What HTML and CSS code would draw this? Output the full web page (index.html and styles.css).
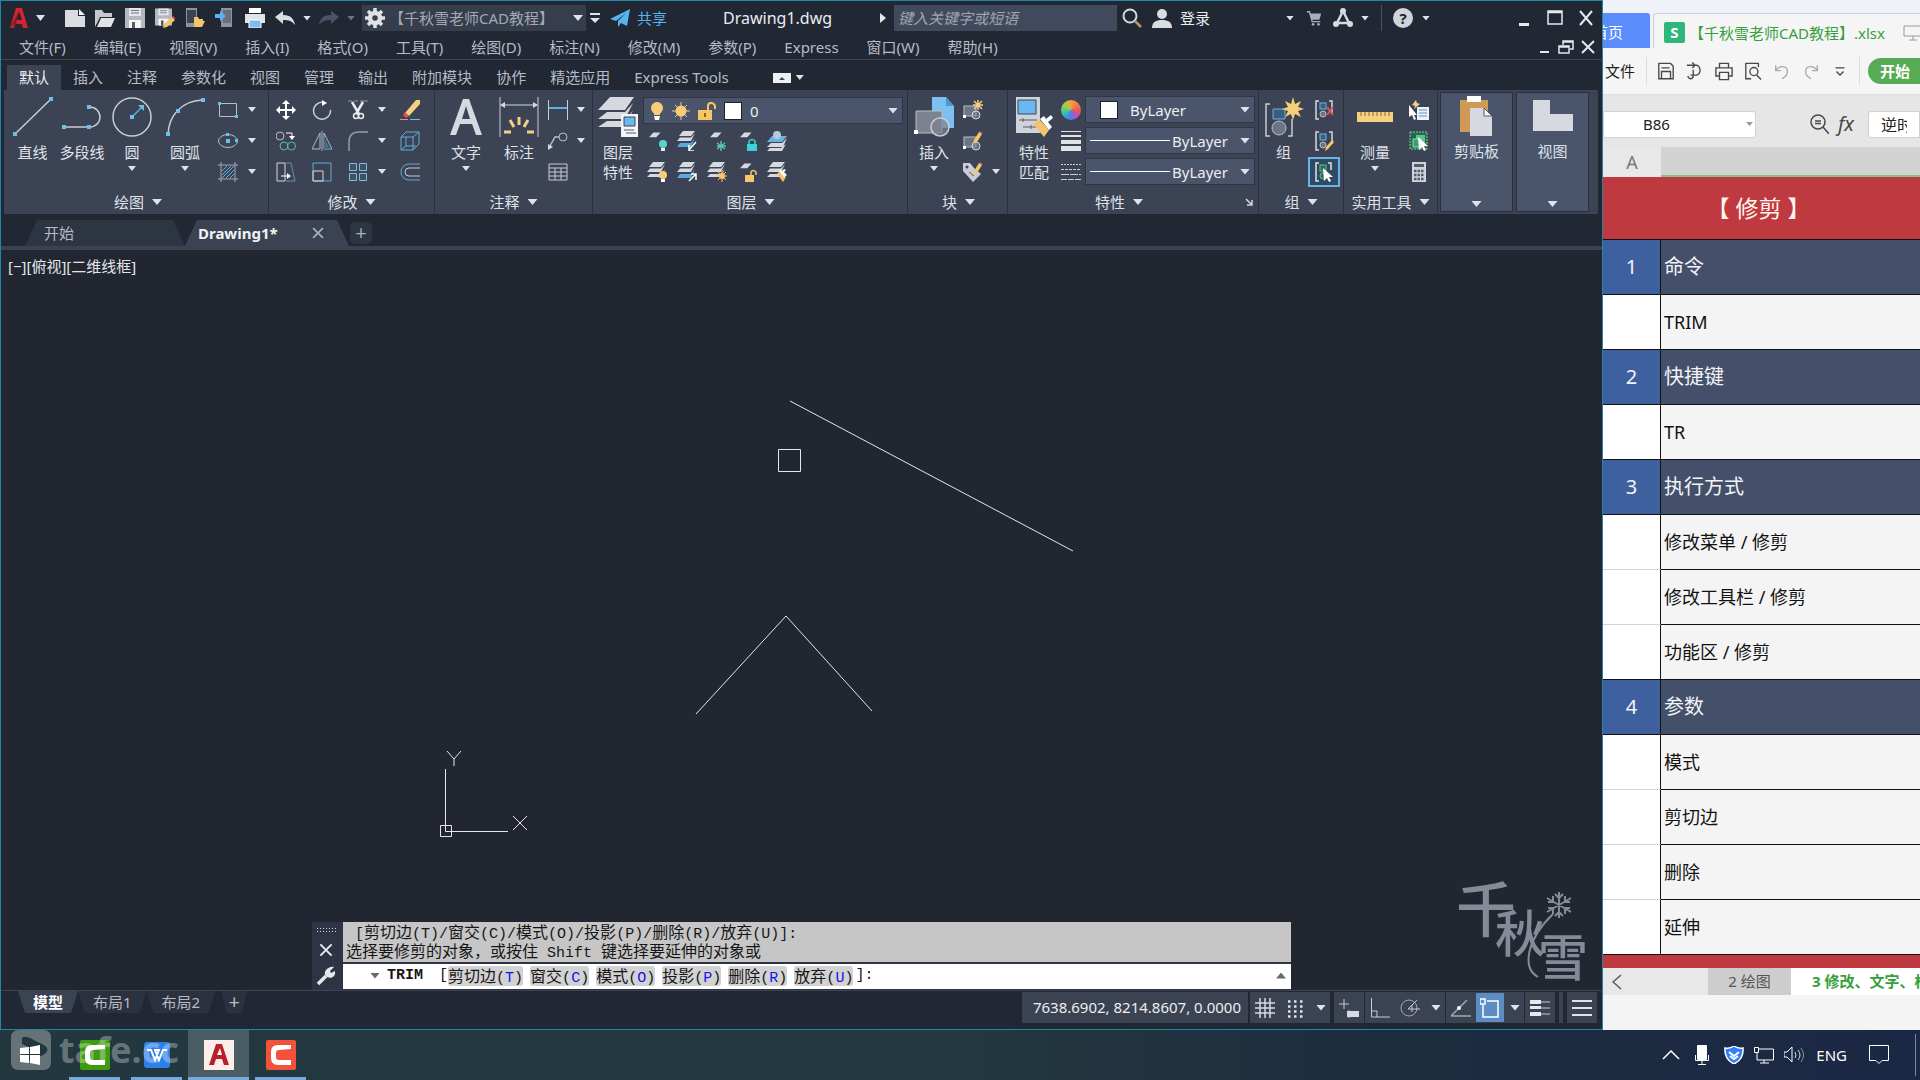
FILE: index.html
```html
<!DOCTYPE html>
<html lang="zh-CN">
<head>
<meta charset="utf-8">
<title>Drawing1.dwg</title>
<link rel="stylesheet" href="styles.css">
</head>
<body>
<svg class="sprite" aria-hidden="true">
  <symbol id="i-layer" viewBox="0 0 20 20"><path d="M8 4h12l-7 8H1z" fill="#d6d9df"/></symbol>
  <symbol id="i-stack" viewBox="0 0 20 20"><g fill="#d6d9df"><path d="M6 0h12l-4 5H2z"/><path d="M3 6.500h11l4-4.500-4 8H0z"/><path d="M3 12h11l4-5-4 8H0z"/></g></symbol>
  <symbol id="i-stackblue" viewBox="0 0 20 20"><path d="M6 0h12l-4 5H2z" fill="#d6d9df"/><path d="M3 6.500h11l4-4.500-4 8H0z" fill="#d6d9df"/><path d="M3 12h11l4-5-4 9H0z" fill="#5ba8e0"/></symbol>
  <symbol id="i-brush" viewBox="0 0 20 20"><path d="M10 12l3-3 6 6-3 5z" fill="#f2c46c"/><path d="M12 9l5 6 3-2-3-3 2-2-2-1-2 2-1-2z" fill="#fff"/></symbol>
  <symbol id="i-block" viewBox="0 0 20 20"><rect x="1" y="6" width="12" height="10" fill="#6d7483" stroke="#b9bec8"/><circle cx="13" cy="15" r="4" fill="#7f8694" fill-opacity=".6" stroke="#d6d9df"/><path d="M0 15h3v3H0z" fill="#fff"/></symbol>
  <symbol id="i-pencil" viewBox="0 0 20 20"><path d="M11 9l5-8 3 2-5 8-4 1z" fill="#f6c667"/><path d="M16 1l1-1 3 2-1 1z" fill="#e0525c"/></symbol>
  <symbol id="i-floppy" viewBox="0 0 20 20"><path d="M0 0h20v20H0z" fill="#b4b8bf"/><path d="M4 0h12v8H4z" fill="#e4e6ea"/><path d="M6 2.500h8M6 5h8" stroke="#70757f"/><path d="M4 12h12v8H4z" fill="#f5f5f5"/><path d="M7 14h3v6H7z" fill="#555b68"/></symbol>
  <symbol id="i-cursor" viewBox="0 0 20 20"><path d="M9 6l10 9h-4l2 4-2 1-2-4-3 3z" fill="#fff"/></symbol>
  <symbol id="i-group" viewBox="0 0 20 20"><path d="M5 1H2v18h3M15 1h3v12" fill="none" stroke="#d6d9df" stroke-width="1.500"/><rect x="6" y="3" width="6" height="6" fill="#3b5e7c" stroke="#6bb3e6"/><circle cx="9" cy="14" r="3" fill="#6d7483" stroke="#b9bec8"/></symbol>
  <symbol id="i-x" viewBox="0 0 20 20"><path d="M3 3l14 14M17 3L3 17" fill="none" stroke="currentColor" stroke-width="2.500"/></symbol>
</svg>

<main class="desktop">
<section class="cad">
  <header class="titlebar">
    <button class="logo" aria-label="应用程序菜单"><svg width="18" height="20" viewBox="0 0 18 20"><path d="M0 20L6 0h6l6 20h-5l-1-4H5l-1 4zM6 12h6L9 3z" fill="#d5232f"/><path d="M0 20L9 3l-3 13H5z" fill="#8f1822"/></svg></button>
    <i class="caret caret-logo"></i>
    <button class="qa" aria-label="新建"><svg viewBox="0 0 20 20"><path d="M0 2h13v6h7v11H0z" fill="#d9dce1"/><path d="M14 1l6 6h-6z" fill="#f3f4f6"/></svg></button>
    <button class="qa" aria-label="打开"><svg viewBox="0 0 20 20"><path d="M0 2h7l2 3h8v4H5L0 19z" fill="#c5c8ce"/><path d="M6 10h14l-4 9H2z" fill="#e1e3e7"/></svg></button>
    <button class="qa" aria-label="保存"><svg viewBox="0 0 20 20"><use href="#i-floppy"/></svg></button>
    <button class="qa" aria-label="另存为"><svg viewBox="0 0 20 20"><use href="#i-floppy" width="17" height="18"/><path d="M8 20l1-4 8-7 3 3-8 7z" fill="#f6c667"/><path d="M17 9l1-1 2 2v2z" fill="#e0525c"/></svg></button>
    <button class="qa" aria-label="从移动设备打开"><svg viewBox="0 0 20 20"><path d="M1 0h11v19H1z" fill="#8d929c"/><path d="M2 2h9v13H2z" fill="#3c4250"/><path d="M9 19V9h4l1 2h4v2h2l-3 6z" fill="#f2c46c"/></svg></button>
    <button class="qa" aria-label="保存到移动设备"><svg viewBox="0 0 20 20"><path d="M6 0h11v19H6z" fill="#8d929c"/><path d="M8 2h8v13H8z" fill="#69707d"/><path d="M0 6h5V3l6 5-6 5v-3H0z" fill="#5ab2f0"/></svg></button>
    <button class="qa" aria-label="打印"><svg viewBox="0 0 20 20"><path d="M4 0h12v5H4z" fill="#fff"/><path d="M0 6h20v9H0z" fill="#e1e3e7"/><path d="M4 12h12v8H4z" fill="#7dbbf0" stroke="#fff"/></svg></button>
    <button class="qa" aria-label="放弃"><svg viewBox="0 0 20 20"><path d="M0 9l8-6v4c8 0 11 4 12 10-3-4-6-5-12-5v4z" fill="#d9dce1"/></svg></button>
    <i class="caret caret-s"></i>
    <button class="qa qa-redo" aria-label="重做"><svg viewBox="0 0 20 20"><path d="M20 9l-8-6v4C4 7 1 11 0 17c3-4 6-5 12-5v4z" fill="#4c5364"/></svg></button>
    <i class="caret caret-s dim"></i>
    <div class="workspace">
      <svg width="20" height="20" viewBox="0 0 20 20"><circle cx="10" cy="10" r="5" fill="none" stroke="#dfe1e6" stroke-width="4.500"/><path d="M10 0v4M10 16v4M0 10h4M16 10h4M3 3l3 3M14 14l3 3M17 3l-3 3M6 14l-3 3" stroke="#dfe1e6" stroke-width="3.500"/></svg>
      <select aria-label="工作空间"><option>【千秋雪老师CAD教程】</option></select><i class="caret"></i>
    </div>
    <i class="more"></i>
    <button class="share"><svg width="20" height="20" viewBox="0 0 20 20"><path d="M0 11L20 1l-3 17-6-3-3 4v-6l8-8-10 8z" fill="#5ab2f0"/></svg>共享</button>
    <span class="doc">Drawing1.dwg</span>
    <i class="play"></i>
    <input class="search" type="search" placeholder="键入关键字或短语" aria-label="搜索">
    <button class="qa" aria-label="搜索"><svg viewBox="0 0 20 20"><circle cx="8" cy="8" r="6.500" fill="none" stroke="#d6d9df" stroke-width="2"/><path d="M13 13l6 6" stroke="#b49a5e" stroke-width="2.500"/></svg></button>
    <button class="login"><svg width="20" height="20" viewBox="0 0 20 20"><circle cx="10" cy="6" r="5" fill="#d9dce1"/><path d="M0 20c0-6 4-8 10-8s10 2 10 8z" fill="#d9dce1"/></svg>登录</button>
    <span class="grow"></span>
    <i class="caret caret-s"></i>
    <button class="qa qa-cart" aria-label="商店"><svg viewBox="0 0 20 20"><path d="M2 3h3l3 11h9" fill="none" stroke="#a9adb6" stroke-width="1.500"/><path d="M5 5h13l-2 7H7z" fill="#a9adb6"/><circle cx="9" cy="17" r="1.500" fill="#a9adb6"/><circle cx="15" cy="17" r="1.500" fill="#a9adb6"/></svg></button>
    <button class="qa" aria-label="应用"><svg viewBox="0 0 20 20"><path d="M10 3L4 15h12z" fill="none" stroke="#d6d9df" stroke-width="2.500"/><circle cx="10" cy="3" r="3" fill="#d6d9df"/><circle cx="3" cy="16" r="3" fill="#d6d9df"/><circle cx="17" cy="16" r="3" fill="#d6d9df"/></svg></button>
    <i class="caret caret-s"></i>
    <i class="tsep"></i>
    <button class="help" aria-label="帮助">?</button>
    <i class="caret caret-s caret-help"></i>
    <button class="win" aria-label="最小化"><svg viewBox="0 0 20 20"><path d="M5 15h10v3H5z" fill="#e6e8ec"/></svg></button>
    <button class="win" aria-label="最大化"><svg viewBox="0 0 20 20"><path d="M3 3h14v13H3zM3 4.500h14" fill="none" stroke="#e6e8ec" stroke-width="1.500"/></svg></button>
    <button class="win" aria-label="关闭"><svg viewBox="0 0 20 20"><path d="M4 3l12 14M16 3L4 17" stroke="#e6e8ec" stroke-width="2"/></svg></button>
  </header>

  <nav class="menubar">
    <a href="#">文件(F)</a><a href="#">编辑(E)</a><a href="#">视图(V)</a><a href="#">插入(I)</a><a href="#">格式(O)</a><a href="#">工具(T)</a><a href="#">绘图(D)</a><a href="#">标注(N)</a><a href="#">修改(M)</a><a href="#">参数(P)</a><a href="#">Express</a><a href="#">窗口(W)</a><a href="#">帮助(H)</a>
    <span class="grow"></span>
    <button class="mdi" aria-label="最小化图形"><svg viewBox="0 0 20 20"><path d="M6 14h9v2H6z" fill="#e6e8ec"/></svg></button>
    <button class="mdi" aria-label="还原图形"><svg viewBox="0 0 20 20"><path d="M3 9h10v7H3zM3 10h10M7 8V4h10v8h-3M7 5h10" fill="none" stroke="#e6e8ec" stroke-width="1.500"/></svg></button>
    <button class="mdi" aria-label="关闭图形"><svg viewBox="0 0 20 20"><path d="M4 4l12 12M16 4L4 16" stroke="#e6e8ec" stroke-width="2"/></svg></button>
  </nav>

  <nav class="ribbon-tabs">
    <a class="on" href="#">默认</a><a href="#">插入</a><a href="#">注释</a><a href="#">参数化</a><a href="#">视图</a><a href="#">管理</a><a href="#">输出</a><a href="#">附加模块</a><a href="#">协作</a><a href="#">精选应用</a><a href="#">Express Tools</a>
    <button class="collapse" aria-label="最小化功能区"><svg width="18" height="10" viewBox="0 0 18 10"><path d="M0 0h18v10H0z" fill="#eef0f3"/><path d="M6 7h6L9 4z" fill="#444"/></svg></button><i class="caret caret-s"></i>
  </nav>

  <div class="ribbon">
    <section class="panel p-draw">
      <div class="body">
        <button class="big b-49"><svg viewBox="0 0 40 40"><path d="M2 37L38 2" stroke="#c9ccd3" stroke-width="1.500"/><path d="M0 35h4v4H0zM36 0h4v4h-4z" fill="#6bc0e8"/></svg>直线</button>
        <button class="big b-50"><svg viewBox="0 0 40 40"><path d="M2 30h26a10 10 0 0 0 0-20" fill="none" stroke="#c9ccd3" stroke-width="1.500"/><path d="M0 28h4v4H0zM25 28h4v4h-4zM25 8h4v4h-4z" fill="#6bc0e8"/></svg>多段线</button>
        <button class="big b-50"><svg viewBox="0 0 40 40"><circle cx="20" cy="20" r="19" fill="none" stroke="#c9ccd3" stroke-width="1.500"/><path d="M20 20l10-10" stroke="#5ab2e0" stroke-width="1.500"/><path d="M18 18h4v4h-4zM26 8h6v6z" fill="#6bc0e8"/></svg>圆<i class="caret caret-s"></i></button>
        <button class="big b-56"><svg viewBox="0 0 40 40"><path d="M3 37C4 18 17 4 37 3" fill="none" stroke="#c9ccd3" stroke-width="1.500"/><path d="M1 35h4v4H1zM36 1h4v4h-4zM11 12h4v4h-4z" fill="#6bc0e8"/></svg>圆弧<i class="caret caret-s"></i></button>
        <div class="tools t-draw">
          <button aria-label="矩形"><svg viewBox="0 0 20 20"><path d="M1.500 3.500h17v13h-17z" fill="none" stroke="#b9bec8"/><path d="M0 2h3v3H0zM17 15h3v3h-3z" fill="#6bc0e8"/></svg></button><i class="caret caret-s"></i>
          <button aria-label="椭圆"><svg viewBox="0 0 20 20"><ellipse cx="10" cy="10" rx="9.500" ry="6.500" fill="none" stroke="#b9bec8"/><path d="M8 2h3v3H8zM17 8h3v3h-3zM8 8h4v4H8z" fill="#6bc0e8"/></svg></button><i class="caret caret-s"></i>
          <button aria-label="图案填充"><svg viewBox="0 0 20 20"><path d="M3 0v20M17 0v20M0 3h20M0 17h20" stroke="#a3a8b3"/><path d="M4 9l5-5M4 13l9-9M4 16L16 4M8 16l8-8M12 16l4-4" stroke="#5ab2e0"/></svg></button><i class="caret caret-s"></i>
        </div>
      </div>
      <h2>绘图<i class="caret"></i></h2>
    </section>

    <section class="panel p-modify">
      <div class="body">
        <div class="tools t-modify">
          <button aria-label="移动"><svg viewBox="0 0 20 20"><path d="M10 1v18M1 10h18" stroke="#fff" stroke-width="2"/><path d="M10 0l4 4H6zM10 20l4-4H6zM0 10l4-4v8zM20 10l-4-4v8z" fill="#fff"/></svg></button>
          <button aria-label="旋转"><svg viewBox="0 0 20 20"><path d="M12 2.500A8.500 8.500 0 1 0 18.500 10" fill="none" stroke="#c9ccd3" stroke-width="1.500"/><path d="M10 0l5 3-5 3z" fill="#fff"/></svg></button>
          <button aria-label="修剪"><svg viewBox="0 0 20 20"><path d="M0 1h4M6 1h4M12 1h8" stroke="#9499a5"/><path d="M4 2l7 12M15 2l-7 12" stroke="#e8eaee" stroke-width="2.500"/><circle cx="8" cy="16" r="2.500" fill="none" stroke="#e8eaee" stroke-width="1.500"/><circle cx="13" cy="16" r="2.500" fill="none" stroke="#e8eaee" stroke-width="1.500"/></svg></button><i class="caret caret-s"></i>
          <button aria-label="删除"><svg viewBox="0 0 20 20"><path d="M5 13L16 0h4v4L9 16z" fill="#f6cf80"/><path d="M5 12l4 4-3 2-3-3z" fill="#e0525c"/><path d="M0 19.500h8" stroke="#f08a8a"/><path d="M10 19.500h10" stroke="#6bc0e8"/></svg></button>
          <button aria-label="复制"><svg viewBox="0 0 20 20"><circle cx="4" cy="5" r="4" fill="none" stroke="#b9bec8"/><circle cx="8" cy="15" r="4" fill="none" stroke="#5cb8a8"/><circle cx="15.500" cy="15" r="4" fill="none" stroke="#5cb8a8"/><path d="M10 2h6v4" fill="none" stroke="#fff"/><path d="M13 5h6l-3 4z" fill="#fff"/></svg></button>
          <button aria-label="镜像"><svg viewBox="0 0 20 20"><path d="M8 2v16H0zM12 2v16h8zM10 0v20" fill="none" stroke="#a9b8c8"/><path d="M12 6v12h6z" fill="#40708c"/></svg></button>
          <button aria-label="圆角"><svg viewBox="0 0 20 20"><path d="M1 20V11Q1 1 11 1h9" fill="none" stroke="#8fa0b4" stroke-width="1.500"/></svg></button><i class="caret caret-s"></i>
          <button aria-label="分解"><svg viewBox="0 0 20 20"><path d="M1 6h12v13H1zM1 6l5-5h13v12l-6 6M13 6l6-5M6 6v9h10M6 15l-5 4" fill="none" stroke="#62add6"/></svg></button>
          <button aria-label="拉伸"><svg viewBox="0 0 20 20"><path d="M1 1h8v18H1z" fill="none" stroke="#d6d9df"/><path d="M10 1h5l4 18H10" fill="none" stroke="#5c93b4"/><path d="M5 14h7" stroke="#fff"/><path d="M11 11l4 3-4 3z" fill="#fff"/></svg></button>
          <button aria-label="缩放"><svg viewBox="0 0 20 20"><path d="M1 1h18v18H1z" fill="none" stroke="#62add6"/><path d="M1 9h10v10H1z" fill="none" stroke="#d6d9df"/></svg></button>
          <button aria-label="阵列"><svg viewBox="0 0 20 20"><path d="M1.500 1.500h7v7h-7zM11.500 1.500h7v7h-7zM1.500 11.500h7v7h-7zM11.500 11.500h7v7h-7z" fill="#35546b" stroke="#8fb8d4"/></svg></button><i class="caret caret-s"></i>
          <button aria-label="偏移"><svg viewBox="0 0 20 20"><path d="M20 2H9a8 8 0 0 0 0 16h11" fill="none" stroke="#62add6"/><path d="M20 6H9a4 4 0 0 0 0 8h11" fill="none" stroke="#c9ccd3"/></svg></button>
        </div>
      </div>
      <h2>修改<i class="caret"></i></h2>
    </section>

    <section class="panel p-note">
      <div class="body">
        <button class="big b-50"><svg viewBox="0 0 40 40"><path d="M4 38L17 2h6l13 36h-6l-4-11H14l-4 11zM16 22h8L20 9z" fill="#d6d9df"/></svg>文字<i class="caret caret-s"></i></button>
        <button class="big b-56"><svg viewBox="0 0 40 40"><path d="M1 0v40M39 0v40" stroke="#c9ccd3"/><path d="M2 8h36" stroke="#d6d9df"/><path d="M1 8l5-3v6zM39 8l-5-3v6z" fill="#d6d9df"/><path d="M20 20v8M11 23l4 7M29 23l-4 7M5 35h7M28 35h7" stroke="#f6cf80" stroke-width="3"/></svg>标注</button>
        <div class="tools t-note">
          <button aria-label="线性"><svg viewBox="0 0 20 20"><path d="M.5 0v20M19.500 0v20" stroke="#c9ccd3"/><path d="M1 8h18" stroke="#5ab2e0" stroke-width="2"/></svg></button><i class="caret caret-s"></i>
          <button aria-label="引线"><svg viewBox="0 0 20 20"><circle cx="15" cy="6" r="4" fill="none" stroke="#b9bec8"/><path d="M11 6H7l-5 9" fill="none" stroke="#b9bec8" stroke-width="1.500"/><path d="M0 19v-6l5 3z" fill="#d6d9df"/></svg></button><i class="caret caret-s"></i>
          <button aria-label="表格"><svg viewBox="0 0 20 20"><path d="M1 2h18v16H1zM1 6h18M1 10h18M1 14h18M7 6v12M13 6v12" fill="none" stroke="#c9ccd3"/></svg></button><i></i>
        </div>
      </div>
      <h2>注释<i class="caret"></i></h2>
    </section>

    <section class="panel p-layer">
      <div class="body">
        <button class="big b-48"><svg viewBox="0 0 40 40"><path d="M12 0h24l-9 13H0zM9 15h18l8-9-8 16H0zM9 24h18l8-11-8 17H0z" fill="#d6d9df"/><path d="M23 17h17v23H23z" fill="#f3f4f6"/><path d="M26 20h11v9H26z" fill="#6bb8f0" stroke="#3b4658"/><path d="M26 33h10M28 36h10" stroke="#555b68"/></svg>图层<br>特性</button>
        <div class="layer-side">
          <label class="combo combo-layer">
            <svg width="14" height="18" viewBox="0 0 14 18"><circle cx="7" cy="6" r="6" fill="#f8cd78"/><path d="M4 10h6v3H4z" fill="#f8cd78"/><path d="M4 14h6l-1 4H5z" fill="#fff"/></svg>
            <svg width="18" height="18" viewBox="0 0 18 18"><circle cx="9" cy="9" r="5.500" fill="#f8cd78"/><path d="M9 0v18M0 9h18M3 3l12 12M15 3L3 15" stroke="#f8cd78" stroke-width="1"/></svg>
            <svg width="18" height="18" viewBox="0 0 18 18"><path d="M0 8h14v10H0z" fill="#f6c667"/><path d="M10 8V4q0-3 3-3t4 3v3" fill="none" stroke="#f6c667" stroke-width="2"/><path d="M7 11v4" stroke="#8a6218" stroke-width="2"/></svg>
            <i class="swatch"></i>
            <select aria-label="图层"><option>0</option></select><i class="caret"></i>
          </label>
          <div class="tools t-layer">
            <button aria-label="关闭图层"><svg viewBox="0 0 20 20"><use href="#i-layer" width="15" height="12" y="-1"/><circle cx="16" cy="13" r="4" fill="#59d3cb"/><path d="M14 17h4v3h-4z" fill="#e8eaee"/></svg></button>
            <button aria-label="隔离"><svg viewBox="0 0 20 20"><use href="#i-stackblue"/><path d="M19 11l-7 8M12 14v6h5" fill="none" stroke="#fff" stroke-width="1.500"/></svg></button>
            <button aria-label="冻结"><svg viewBox="0 0 20 20"><use href="#i-layer" width="17" height="12" y="-1"/><path d="M14 10v10M10 12l8 6M18 12l-8 6M10 15h9" stroke="#59c3b4" stroke-width="1.500"/></svg></button>
            <button aria-label="锁定"><svg viewBox="0 0 20 20"><use href="#i-layer" width="17" height="12" y="-1"/><path d="M10 13h10v7H10z" fill="#40cfd8"/><path d="M12 13v-3q3-3 6 0v3" fill="none" stroke="#40cfd8" stroke-width="1.500"/></svg></button>
            <button aria-label="置为当前"><svg viewBox="0 0 20 20"><path d="M4 12h11l5-5-4 9H0zM3 17h11l5-4-4 7H0z" fill="#d6d9df"/><path d="M5 5h15l-5 6H0z" fill="#6bb3e6"/><circle cx="10" cy="4" r="4" fill="#b5c9dc"/></svg></button>
            <button aria-label="打开所有图层"><svg viewBox="0 0 20 20"><use href="#i-stack"/><circle cx="16" cy="13" r="4" fill="#f8cd78"/><path d="M14 17h4v3h-4z" fill="#fff"/></svg></button>
            <button aria-label="取消隔离"><svg viewBox="0 0 20 20"><use href="#i-stackblue"/><path d="M12 19l7-7M14 12h5v6" fill="none" stroke="#fff" stroke-width="1.500"/></svg></button>
            <button aria-label="解冻"><svg viewBox="0 0 20 20"><use href="#i-stack"/><circle cx="15" cy="14" r="3" fill="#f6c667"/><path d="M15 8v12M9 14h11M11 10l8 8M19 10l-8 8" stroke="#f6c667"/></svg></button>
            <button aria-label="解锁"><svg viewBox="0 0 20 20"><use href="#i-layer" width="17" height="12" y="-1"/><path d="M8 13h9v7H8z" fill="#f6c667"/><path d="M14 13v-3q2-3 5 0v3" fill="none" stroke="#f6c667" stroke-width="1.500"/></svg></button>
            <button aria-label="匹配图层"><svg viewBox="0 0 20 20"><use href="#i-stack"/><use href="#i-brush"/></svg></button>
          </div>
        </div>
      </div>
      <h2>图层<i class="caret"></i></h2>
    </section>

    <section class="panel p-block">
      <div class="body">
        <button class="big b-48"><svg viewBox="0 0 40 40"><path d="M18 0h14l8 9v22H18z" fill="#7cc0f2"/><path d="M32 0v9h8z" fill="#4f96cc"/><path d="M2 14h26v22H2z" fill="#7c828f" stroke="#b9bec8"/><circle cx="26" cy="30" r="9" fill="#7c828f" fill-opacity=".7" stroke="#c9ccd3" stroke-width="1.500"/><path d="M0 33h4v4H0z" fill="#fff"/></svg>插入<i class="caret caret-s"></i></button>
        <div class="tools t-block">
          <button aria-label="创建块"><svg viewBox="0 0 20 20"><use href="#i-block"/><path d="M15 0v10M10 5h10M11 1l8 8M19 1l-8 8" stroke="#f6cf80" stroke-width="1.500"/></svg></button><i></i>
          <button aria-label="编辑块"><svg viewBox="0 0 20 20"><use href="#i-block"/><use href="#i-pencil"/></svg></button><i></i>
          <button aria-label="编辑属性"><svg viewBox="0 0 20 20"><path d="M0 1h7l4 5 7 6-8 8L0 9z" fill="#c9ccd3"/><circle cx="4" cy="5" r="1.500" fill="#3c4354"/><path d="M6 10l5 4" stroke="#555b68"/><use href="#i-pencil"/></svg></button><i class="caret caret-s"></i>
        </div>
      </div>
      <h2>块<i class="caret"></i></h2>
    </section>

    <section class="panel p-props">
      <div class="body">
        <button class="big b-48"><svg viewBox="0 0 40 40"><path d="M2 0h24v36H2z" fill="#d0d3d9"/><path d="M4 3h18v14H4z" fill="#6bb8f0" stroke="#3b4658"/><path d="M5 23h18M9 30h14M9 21v4M17 28v4" stroke="#555b68"/><path d="M19 27l7-4 9 10-5 7z" fill="#f2c46c"/><path d="M26 22l9 11 3-3-4-5 5-4-2-3-5 4-2-3z" fill="#fff"/></svg>特性<br>匹配</button>
        <div class="tools t-props">
          <span class="wheel"></span>
          <label class="combo"><i class="swatch swatch-l"></i><select aria-label="颜色"><option>ByLayer</option></select><i class="caret"></i></label>
          <svg width="20" height="20" viewBox="0 0 20 20"><path d="M0 0h20v1H0zM0 4h20v2H0zM0 9h20v4H0zM0 15h20v5H0z" fill="#e1e3e7"/></svg>
          <label class="combo"><i class="rule"></i><select aria-label="线宽"><option>ByLayer</option></select><i class="caret"></i></label>
          <svg width="20" height="20" viewBox="0 0 20 20"><g stroke="#c9ccd3"><path d="M0 2.500h20" stroke-dasharray="2 1"/><path d="M0 7.500h20" stroke-dasharray="3 1"/><path d="M0 12.500h20" stroke-dasharray="8 1"/><path d="M0 17.500h20" stroke-dasharray="6 1"/></g></svg>
          <label class="combo"><i class="rule"></i><select aria-label="线型"><option>ByLayer</option></select><i class="caret"></i></label>
        </div>
      </div>
      <h2>特性<i class="caret"></i><svg class="launch" width="8" height="8" viewBox="0 0 8 8"><path d="M1 1l5 5M7 2v5H2" fill="none" stroke="#d6d9df" stroke-width="1.500"/></svg></h2>
    </section>

    <section class="panel p-group">
      <div class="body">
        <button class="big b-49"><svg viewBox="0 0 40 40"><path d="M6 7H2v32h4M24 39h4V22" fill="none" stroke="#c9ccd3" stroke-width="1.500"/><path d="M9 12h12v10H9z" fill="#3b5e7c" stroke="#6bb3e6"/><circle cx="15" cy="31" r="7" fill="#6d7483" stroke="#b9bec8"/><path d="M29 0l2 7 6-3-3 6 6 2-6 2 3 6-6-3-2 6-2-6-6 3 3-6-6-2 6-2-3-6 6 3z" fill="#f8cd78"/></svg>组</button>
        <div class="tools t-group">
          <button aria-label="解除编组"><svg viewBox="0 0 20 20"><use href="#i-group"/><path d="M13 7l6 8M19 7l-6 8" stroke="#e0525c" stroke-width="2"/></svg></button>
          <button aria-label="组编辑"><svg viewBox="0 0 20 20"><use href="#i-group"/><path d="M11 20l1-4 6-7 2 2-6 7z" fill="#f6c667"/></svg></button>
          <button class="on" aria-label="启用组选择"><svg viewBox="0 0 20 20"><path d="M5 1H2v18h3M14 1h3v7" fill="none" stroke="#e1e3e7" stroke-width="1.500"/><rect x="6" y="3" width="6" height="6" fill="#2c6b58" stroke="#58c48c"/><circle cx="9" cy="14" r="3" fill="#2c6b58" stroke="#58c48c"/><use href="#i-cursor"/></svg></button>
        </div>
      </div>
      <h2>组<i class="caret"></i></h2>
    </section>

    <section class="panel p-util">
      <div class="body">
        <button class="big b-52"><svg viewBox="0 0 40 40"><path d="M2 15h36v10H2z" fill="#f6cf80"/><path d="M6 15v4M10 15v4M14 15v4M18 15v4M22 15v4M26 15v4M30 15v4M34 15v4" stroke="#8a6a2a"/></svg>测量<i class="caret caret-s"></i></button>
        <div class="tools t-util">
          <button aria-label="快速选择"><svg viewBox="0 0 20 20"><path d="M8 7h12v13H8z" fill="#eef1f5"/><path d="M10 10h8M10 13h8M10 16h8" stroke="#4b96d0"/><path d="M7 0L3 5l3 1-1 3 6-5-3-1z" fill="#f6cf80"/><path d="M0 5v12l3-2 2 5 2-1-2-4h3z" fill="#fff"/></svg></button>
          <button aria-label="全部选择"><svg viewBox="0 0 20 20"><path d="M1 1h17v17H1z" fill="#2d6450" stroke="#6fd39e" stroke-dasharray="2 1"/><path d="M7 4h9v9H7z" fill="#58c48c"/><path d="M4 8h8v8H4z" fill="#3da06e" stroke="#7fe0ae"/><use href="#i-cursor"/></svg></button>
          <button aria-label="快速计算器"><svg viewBox="0 0 20 20"><path d="M3 0h14v20H3z" fill="#d0d3d9"/><path d="M5 2h10v3H5z" fill="#555b68"/><path d="M5 9h10M5 13h10M5 17h10" stroke="#555b68" stroke-width="2.500" stroke-dasharray="2.500 1"/></svg></button>
        </div>
      </div>
      <h2>实用工具<i class="caret"></i></h2>
    </section>

    <section class="panel folded">
      <button class="big"><svg viewBox="0 0 40 40"><path d="M4 4h28v32H4z" fill="#cf9a55"/><path d="M11 0h14v6H11z" fill="#fff"/><path d="M14 12h14l8 8v20H14z" fill="#d6d9df"/><path d="M28 12v8h8z" fill="#f5f6f8" stroke="#555b68"/></svg>剪贴板</button>
      <i class="caret"></i>
    </section>
    <section class="panel folded">
      <button class="big"><svg viewBox="0 0 40 40"><path d="M0 4h17v14h23v17H0z" fill="#d6d9df"/></svg>视图</button>
      <i class="caret"></i>
    </section>
  </div>

  <nav class="file-tabs">
    <a class="ft-start" href="#">开始</a>
    <a class="ft-doc" href="#">Drawing1*<svg width="14" height="14" viewBox="0 0 20 20"><use href="#i-x"/></svg></a>
    <button class="ft-add" aria-label="新图形">+</button>
  </nav>

  <div class="canvas">
    <p class="view-label">[−][俯视][二维线框]</p>
    <svg class="drawing" role="img" aria-label="图形">
      <g fill="none" stroke="#e4e6ea">
        <path d="M789 151L1072 301M695 464l90-98 86 95"/>
        <path d="M777.500 199.500h22v22h-22z"/>
        <path d="M444.500 519v62.500H507M439.500 575.500h11v11h-11z"/>
        <path d="M446 501l7 8v7M460 501l-7 8M512 566l14 14M526 566l-14 14"/>
      </g>
    </svg>
    <svg class="mark" viewBox="0 -20 132 130">
      <g fill="#858a96" font-family="'Noto Sans CJK SC',sans-serif" font-weight="500">
        <text x="0" y="52" font-size="60">千</text><text x="39" y="72" font-size="50">秋</text><text x="82" y="96" font-size="50">雪</text>
      </g>
      <g fill="none" stroke="#858a96" stroke-width="2"><path d="M103 12v26M91 18l24 14M115 18L91 32M99 14l4 4 4-4M99 36l4-4 4 4M92 22l5 0v-6M114 28l-5 0v6M92 28h5v6M114 22h-5v-6"/><path d="M97 34C70 60 66 88 82 97"/></g>
    </svg>
    <div class="cmd">
      <div class="cmd-side">
        <i class="grip"></i>
        <button aria-label="关闭"><svg width="16" height="16" viewBox="0 0 20 20"><use href="#i-x"/></svg></button>
        <button aria-label="自定义"><svg width="20" height="20" viewBox="0 0 20 20"><path d="M2 18l8-8" stroke="#e6e8ec" stroke-width="3.500"/><path d="M18 1l-4 4 1 2 4-2c1 6-4 8-8 6L9 9c-1-5 4-9 9-8z" fill="#e6e8ec"/></svg></button>
      </div>
      <div class="cmd-main">
        <div class="history">
          <p><span>&nbsp;[</span>剪切边<span>(T)/</span>窗交<span>(C)/</span>模式<span>(O)/</span>投影<span>(P)/</span>删除<span>(R)/</span>放弃<span>(U)]:</span></p>
          <p>选择要修剪的对象，或按住<span>&nbsp;Shift&nbsp;</span>键选择要延伸的对象或</p>
        </div>
        <div class="prompt">
          <i class="caret"></i><b>TRIM</b><span class="br">[</span>
          <button>剪切边<span>(<em>T</em>)</span></button><button>窗交<span>(<em>C</em>)</span></button><button>模式<span>(<em>O</em>)</span></button><button>投影<span>(<em>P</em>)</span></button><button>删除<span>(<em>R</em>)</span></button><button>放弃<span>(<em>U</em>)</span></button>
          <span>]:</span>
          <input type="text" aria-label="命令"><i class="caret up"></i>
        </div>
      </div>
    </div>
  </div>

  <footer class="status">
    <nav class="layouts"><a class="on" href="#">模型</a><a href="#">布局1</a><a href="#">布局2</a><button aria-label="新布局">+</button></nav>
    <span class="grow"></span>
    <output class="coords">7638.6902, 8214.8607, 0.0000</output>
    <div class="sg sg-first">
      <button class="s-30" aria-label="栅格"><svg viewBox="0 0 20 20"><path d="M5 0v20M10 0v20M15 0v20M0 5h20M0 10h20M0 15h20" stroke="#d6d9df" stroke-width="1.500"/></svg></button><button class="s-30" aria-label="捕捉"><svg viewBox="0 0 20 20"><path d="M3 3.500h16M3 8.500h16M3 13.500h16M3 18.500h16" stroke="#e1e3e7" stroke-width="2.500" stroke-dasharray="2.500 3.500"/></svg></button><i class="caret"></i>
    </div>
    <div class="sg"><button class="s-30" aria-label="动态输入"><svg viewBox="0 0 20 20"><path d="M5 1v10M0 6h10M10 12v8" stroke="#c9ccd3"/><path d="M8 13h12v6H8z" fill="#d6d9df"/></svg></button></div>
    <div class="sg sg-near"><button class="s-30" aria-label="正交"><svg viewBox="0 0 20 20"><path d="M1.500 0v19H20M1 13h6v6" fill="none" stroke="#c9ccd3"/></svg></button><button class="s-30" aria-label="极轴"><svg viewBox="0 0 20 20"><circle cx="9" cy="10" r="8" fill="none" stroke="#a3a8b3"/><path d="M8 11h12M8 11l9-9M12 7v7" stroke="#c9ccd3"/></svg></button><i class="caret"></i></div>
    <div class="sg sg-near"><button class="s-30" aria-label="追踪"><svg viewBox="0 0 20 20"><path d="M0 18h20M0 18L16 2" stroke="#a3a8b3" stroke-width="1.500"/><circle cx="8" cy="10" r="2" fill="#fff"/></svg></button><button class="s-28 on" aria-label="对象捕捉"><svg viewBox="0 0 20 20"><path d="M3 7v12h15V3H7M0 1h5v5H0z" fill="none" stroke="#fff" stroke-width="1.500"/></svg></button><i class="caret"></i></div>
    <div class="sg sg-near"><button class="s-30" aria-label="线宽"><svg viewBox="0 0 20 20"><path d="M0 2h11v4H0zM0 8h11v3H0zM0 14h11v4H0z" fill="#e6e8ec"/><path d="M11 4h9M11 10h9M11 16h9" stroke="#c9ccd3"/></svg></button></div>
    <i class="sdiv"></i>
    <div class="sg"><button class="s-30" aria-label="自定义"><svg viewBox="0 0 20 20"><path d="M0 3h20M0 10h20M0 17h20" stroke="#e1e3e7" stroke-width="2"/></svg></button></div>
  </footer>
</section>

<section class="wps">
  <nav class="wtabs"><a class="home" href="#">首页</a><a class="book" href="#"><b class="s-icon">S</b>【千秋雪老师CAD教程】.xlsx<svg width="20" height="16" viewBox="0 0 20 16"><path d="M1 1h18v10H1zM6 15h8M10 11v4" fill="none" stroke="#999"/></svg></a></nav>
  <div class="wtools">
    <button class="w-file">文件</button><i class="wsep"></i>
    <button class="wb" aria-label="保存"><svg viewBox="0 0 20 20"><path d="M2 1h13l3 3v14H2zM5 18v-8h10v8M5 6h9" fill="none" stroke="#484848" stroke-width="1.500"/></svg></button>
    <button class="wb" aria-label="输出"><svg viewBox="0 0 20 20"><path d="M1 3h9M7 0l3 3-3 3M10 3h2a6 6 0 0 1 0 11H5M8 8v7q0 3-3 3-2 0-3-3" fill="none" stroke="#484848" stroke-width="1.500"/></svg></button>
    <button class="wb" aria-label="打印"><svg viewBox="0 0 20 20"><path d="M5 6V1h10v5M5 15H1V6h18v9h-4M5 11h10v8H5z" fill="none" stroke="#484848" stroke-width="1.500"/></svg></button>
    <button class="wb" aria-label="打印预览"><svg viewBox="0 0 20 20"><path d="M8 18H2V1h14v4" fill="none" stroke="#484848" stroke-width="1.500"/><circle cx="11" cy="10" r="4.500" fill="none" stroke="#484848" stroke-width="1.500"/><path d="M14 14l5 5" stroke="#484848" stroke-width="1.500"/></svg></button>
    <button class="wb" aria-label="撤销"><svg viewBox="0 0 20 20"><path d="M3 3v6h6M3 9C7 3 16 3 16 10q0 5-6 8" fill="none" stroke="#aaa" stroke-width="1.500"/></svg></button>
    <button class="wb" aria-label="恢复"><svg viewBox="0 0 20 20"><path d="M17 3v6h-6M17 9C13 3 4 3 4 10q0 5 6 8" fill="none" stroke="#aaa" stroke-width="1.500"/></svg></button>
    <button class="wb" aria-label="更多"><svg viewBox="0 0 20 20"><path d="M5 6h10M6 10l4 4 4-4" fill="none" stroke="#484848" stroke-width="1.500"/></svg></button>
    <i class="wsep"></i><button class="w-start">开始</button>
  </div>
  <div class="wformula">
    <input class="namebox" type="text" value="B86" aria-label="名称框"><i class="caret"></i>
    <button class="wz" aria-label="缩小"><svg width="20" height="20" viewBox="0 0 20 20"><circle cx="9" cy="8" r="7" fill="none" stroke="#484848" stroke-width="1.500"/><path d="M6 7h6M6 9.500h6M14 13l6 7" stroke="#484848" stroke-width="1.500"/></svg></button>
    <i class="fx">fx</i>
    <input class="formula" type="text" value="逆时针" aria-label="编辑栏">
  </div>
  <table class="grid">
    <thead><tr class="cols"><th>A</th><th class="sel"></th></tr></thead>
    <tbody>
      <tr class="title"><th colspan="2">【 修剪 】</th></tr>
      <tr class="h"><th>1</th><td>命令</td></tr>
      <tr><th></th><td>TRIM</td></tr>
      <tr class="h"><th>2</th><td>快捷键</td></tr>
      <tr><th></th><td>TR</td></tr>
      <tr class="h"><th>3</th><td>执行方式</td></tr>
      <tr><th></th><td>修改菜单 / 修剪</td></tr>
      <tr><th></th><td>修改工具栏 / 修剪</td></tr>
      <tr><th></th><td>功能区 / 修剪</td></tr>
      <tr class="h"><th>4</th><td>参数</td></tr>
      <tr><th></th><td>模式</td></tr>
      <tr><th></th><td>剪切边</td></tr>
      <tr><th></th><td>删除</td></tr>
      <tr><th></th><td>延伸</td></tr>
      <tr class="next"><th colspan="2"></th></tr>
    </tbody>
  </table>
  <nav class="sheets"><button aria-label="上一个"><svg width="10" height="16" viewBox="0 0 10 16"><path d="M9 1L1 8l8 7" fill="none" stroke="#555" stroke-width="1.500"/></svg></button><a class="s2" href="#">2 绘图</a><a class="s3" href="#">3 修改、文字、标注</a></nav>
</section>
</main>

<footer class="taskbar">
  <button class="start" aria-label="开始"><svg width="20" height="20" viewBox="0 0 20 20"><path d="M0 3l9-1v7H0zM10 2l10-2v9H10zM0 10h9v8l-9-1zM10 10h10v10l-10-2z" fill="#fff"/></svg></button>
  <button class="app" aria-label="Camtasia"><svg width="30" height="30" viewBox="0 0 30 30"><rect width="30" height="30" rx="2" fill="#3f9c12"/><path d="M25 9V5H12Q5 5 5 12v6q0 7 7 7h13v-5H13q-3 0-3-3v-4q0-3 3-3z" fill="#fff"/></svg></button>
  <button class="app" aria-label="WPS"><svg width="26" height="26" viewBox="0 0 26 26"><rect width="26" height="26" rx="3" fill="#2f7fe8"/><path d="M3 8h4l4 10 4-10h-4l4 10 4-10h4" fill="none" stroke="#fff" stroke-width="2"/></svg></button>
  <button class="app on" aria-label="AutoCAD"><svg width="30" height="30" viewBox="0 0 30 30"><path d="M0 0h30v30H0z" fill="#fbeeea"/><path d="M5 25L12 4h6l7 21h-5l-2-6h-6l-2 6zM13 15h5l-2-7z" fill="#b5202b"/></svg></button>
  <button class="app" aria-label="录像"><svg width="30" height="30" viewBox="0 0 30 30"><rect width="30" height="30" rx="2" fill="#f2513c"/><path d="M25 9V5H12Q5 5 5 12v6q0 7 7 7h13v-5H13q-3 0-3-3v-4q0-3 3-3z" fill="#fff"/></svg></button>
  <div class="tafe"><svg width="40" height="40" viewBox="0 0 40 40"><path fill-rule="evenodd" d="M8 0h24q8 0 8 8v24q0 8-8 8H8q-8 0-8-8V8q0-8 8-8zM11 8c4-4 11 2 20 6 7 3 7 8 1 11-9 5-20 7-22 3v-6l10-4-9-4z" fill="#fff"/></svg>tafe.cc</div>
  <span class="grow"></span>
  <div class="tray">
    <svg width="18" height="10" viewBox="0 0 18 10"><path d="M1 9l8-8 8 8" fill="none" stroke="#fff" stroke-width="1.500"/></svg>
    <svg class="mic" width="14" height="20" viewBox="0 0 14 20"><rect x="2" width="10" height="15" rx="1" fill="#fff"/><path d="M.5 10v5.500h13V10M7 16v3.500M3 19.500h8" fill="none" stroke="#fff"/></svg>
    <svg width="20" height="18" viewBox="0 0 20 18"><path d="M1 2q5 1 9-2 4 3 9 2 1 11-9 16Q0 13 1 2z" fill="#2f80ff" stroke="#fff" stroke-width="1.500"/><path d="M5 6l5 4 5-4M6 10l4 3 4-3" fill="none" stroke="#fff" stroke-width="2"/></svg>
    <svg width="20" height="18" viewBox="0 0 20 18"><path d="M5 3h14.500v11H3V7M10 14v3M6 17h9M.5 1.500h4v5h-4z" fill="none" stroke="#fff"/></svg>
    <svg width="20" height="18" viewBox="0 0 20 18"><path d="M0 6h3l5-5v15l-5-5H0z" fill="none" stroke="#fff"/><path d="M11 6q2 3 0 6M14 4q4 5 0 10" fill="none" stroke="#ddd"/><path d="M17 2q5 7 0 14" fill="none" stroke="#8892a4"/></svg>
    <span class="ime">ENG</span>
    <svg width="20" height="20" viewBox="0 0 20 20"><path d="M.5.500h19v15H13l-3 3-3-3H.5z" fill="none" stroke="#fff"/></svg>
  </div>
</footer>
</body>
</html>
```
FILE: styles.css
```css
* { box-sizing: border-box; }
body {
  margin: 0;
  min-height: 100vh;
  display: flex;
  flex-direction: column;
  overflow: hidden;
  background: #212631;
  color: #d9dce2;
  font: 15px/20px "Noto Sans", "Noto Sans CJK SC", sans-serif;
}
button, select, input { font: inherit; color: inherit; background: none; border: 0; padding: 0; margin: 0; }
select { appearance: none; min-width: 0; flex: 1; }
a { color: inherit; text-decoration: none; }
p, h2 { margin: 0; font-weight: 400; }
svg { flex: none; display: block; }
i { flex: none; }
.sprite { display: none; }
.grow { flex: 1; }
.desktop { flex: 1; display: flex; min-height: 0; }

.caret {
  width: 10px; height: 6px;
  background: #dfe2e8;
  clip-path: polygon(0 0, 100% 0, 50% 100%);
}
.caret-s { width: 8px; height: 5px; }
.caret.dim { background: #6d7484; }
.caret.up { clip-path: polygon(0 100%, 100% 100%, 50% 0); }

/* drawing window */
.cad {
  flex: 1; min-width: 0;
  display: flex; flex-direction: column;
  background: #212834;
  border: 1px solid #1f87a8;
}
.titlebar { height: 34px; display: flex; align-items: center; }
.logo { width: 30px; margin-left: 3px; display: flex; justify-content: center; }
.caret-logo { margin: 0 15px 0 2px; width: 9px; }
.qa { width: 30px; display: flex; justify-content: center; }
.qa svg { width: 20px; height: 20px; }
.titlebar .caret-s { margin: 0 3px; }
.workspace {
  width: 224px; height: 26px; margin-left: 4px; padding: 0 3px;
  display: flex; align-items: center; gap: 4px;
  background: #363d4c; color: #a4a9b4;
}
.more { width: 10px; height: 10px; margin: 0 4px; border-top: 2px solid #e1e3e7; position: relative; }
.more::after { content: ""; position: absolute; left: 0; top: 3px; width: 10px; height: 5px; background: #e1e3e7; clip-path: polygon(0 0, 100% 0, 50% 100%); }
.share { display: flex; align-items: center; gap: 7px; margin-left: 6px; color: #5ab2f0; }
.doc { width: 157px; margin-left: 56px; font-size: 16px; color: #eceef1; }
.play { width: 6px; height: 10px; background: #e6e8ec; clip-path: polygon(0 0, 100% 50%, 0 100%); margin-right: 8px; }
.search { width: 223px; height: 26px; padding: 0 4px; background: #414a5c; }
.search::placeholder { color: #a0a5b2; font-style: italic; opacity: 1; }
.login { display: flex; align-items: center; gap: 8px; margin-left: 5px; color: #eceef1; }
.qa-cart { margin: 0 1px 0 4px; width: 26px; }
.qa-cart svg { width: 18px; }
.tsep { width: 1px; height: 26px; background: #4a5163; margin: 0 11px 0 9px; }
.help { width: 20px; height: 20px; border-radius: 50%; background: #d0d3d8; color: #212834; font-weight: 700; }
.titlebar .caret-help { margin: 0 78px 0 9px; }
.win { width: 31px; display: flex; justify-content: center; }
.win:last-child { margin-right: 1px; }
.win svg { width: 20px; height: 20px; }

.menubar { height: 25px; display: flex; align-items: center; gap: 28px; padding-left: 18px; border-bottom: 1px solid #3c4352; color: #b6bbc4; }
.mdi { width: 20px; margin-right: -26px; }
.mdi:last-child { margin-right: 4px; }
.mdi svg { width: 20px; height: 20px; }

.ribbon-tabs { height: 30px; padding: 5px 0 0 6px; display: flex; align-items: center; color: #b6bbc4; }
.ribbon-tabs a { height: 25px; line-height: 25px; padding: 0 12px; }
.ribbon-tabs .on { background: #3c4354; color: #eceef1; }
.collapse { margin: 0 5px 0 32px; }

.ribbon { height: 124px; display: flex; margin: 0 4px 6px 3px; background: #3c4354; color: #dfe2e8; }
.panel { display: flex; flex-direction: column; border-right: 1px solid #2a303e; padding-top: 2px; }
.body { flex: 1; display: flex; align-items: flex-start; }
.panel h2 { height: 24px; font-size: 15px; line-height: 24px; display: flex; align-items: center; justify-content: center; gap: 8px; }
.p-draw { width: 265px; padding-left: 4px; }
.p-modify { width: 166px; }
.p-note { width: 158px; }
.p-note .body { padding-left: 6px; }
.p-layer { width: 315px; padding-left: 1px; }
.p-block { width: 100px; padding-left: 2px; }
.p-props { width: 251px; padding-left: 2px; }
.p-group { width: 85px; }
.p-util { width: 94px; }
.p-util .body { padding-left: 5px; }
.launch { margin-left: 94px; }
.p-props h2 { justify-content: flex-end; padding-right: 5px; }

.big { display: flex; flex-direction: column; align-items: center; padding-top: 5px; white-space: nowrap; line-height: 20px; flex: none; }
.big svg { width: 40px; height: 40px; margin-bottom: 5px; }
.big .caret { margin-top: 4px; }
.b-48 { width: 48px; } .b-49 { width: 49px; } .b-50 { width: 50px; } .b-52 { width: 52px; } .b-56 { width: 56px; }
.tools { display: grid; grid-auto-rows: 31px; place-items: center; padding-top: 2px; }
.tools button svg { width: 20px; height: 20px; }
.t-draw { grid-template-columns: 30px 18px; }
.t-modify { grid-template-columns: 34px 38px 34px 14px 42px; }
.t-note { grid-template-columns: 22px 24px; }
.t-layer { grid-template-columns: repeat(5, 30px); padding-top: 0; }
.t-block { grid-template-columns: 30px 16px; }
.t-props { grid-template-columns: 26px 172px; }
.t-group { grid-template-columns: 31px; }
.t-util { grid-template-columns: 36px; }
.t-group .on { padding: 3px 4px; border: 2px solid #6bb3e6; background: #2f4a63; }
.layer-side { padding-top: 5px; }
.combo { height: 27px; width: 170px; display: flex; align-items: center; padding: 0 4px; background: #4a546a; border: 1px solid #2e3544; color: #eceef1; }
.combo-layer { width: 260px; margin: 0 0 1px 1px; gap: 8px; padding: 0 4px 0 6px; }
.swatch { width: 18px; height: 18px; background: #fff; border: 1px solid #1c212b; }
.swatch-l { margin: 0 12px 0 10px; }
.rule { width: 80px; height: 1px; background: #fff; margin-right: 2px; }
.wheel { width: 20px; height: 20px; border-radius: 50%; background: conic-gradient(#f6a03c, #f05a4a 25%, #a05ad0 40%, #3c8cf0 55%, #3cc896 70%, #a0d04a 85%, #f6a03c); }
.folded { width: 73px; margin: 2px 1px 2px 2px; padding: 0; background: #4a556c; border: 1px solid #2a303e; justify-content: space-between; align-items: center; }
.folded .big { padding-top: 3px; }
.folded .caret { margin-bottom: 4px; }

.file-tabs { height: 30px; display: flex; border-bottom: 4px solid #3b4252; padding-left: 24px; }
.file-tabs a { height: 26px; line-height: 26px; background: #2d3442; clip-path: polygon(12px 0, calc(100% - 12px) 0, 100% 100%, 0 100%); border-radius: 8px 8px 0 0; color: #b6bbc4; }
.file-tabs .ft-start { width: 160px; padding-left: 19px; }
.file-tabs .ft-doc { width: 164px; padding: 0 24px 0 13px; background: #3b4252; color: #f1f2f4; font-weight: 700; display: flex; align-items: center; justify-content: space-between; }
.ft-doc svg { color: #a9aeb9; }
.ft-add { width: 22px; height: 22px; margin: 2px 0 0 1px; border-radius: 5px; background: #2d3442; font-size: 20px; line-height: 20px; color: #a9aeb9; }

.canvas { flex: 1; position: relative; background: #212631; overflow: hidden; }
.view-label { position: relative; padding: 6px 0 0 7px; color: #e4e6ea; }
.drawing { position: absolute; inset: 0; width: 100%; height: 100%; }
.mark { position: absolute; right: 14px; bottom: 0; width: 132px; height: 130px; overflow: visible; }

.cmd { position: absolute; left: 311px; right: 311px; bottom: 0; height: 68px; display: flex; color: #161616; font-size: 16px; background: #2e3443; }
.cmd span, .cmd b { font: 15px/20px "Liberation Mono", monospace; }
.cmd b { font-weight: 700; }
.cmd-side { width: 31px; display: flex; flex-direction: column; align-items: center; justify-content: space-between; padding: 5px 7px 4px 4px; color: #e6e8ec; }
.grip { width: 20px; height: 6px; background: radial-gradient(circle, #d6d9df 1px, transparent 1px) 0 0 / 3px 3px; }
.cmd-main { flex: 1; display: flex; flex-direction: column; gap: 2px; padding-bottom: 1px; }
.history { height: 40px; background: #c6c6c6; padding: 1px 3px; }
.history p { height: 19px; line-height: 19px; }
.prompt { flex: 1; display: flex; align-items: center; background: #fff; padding: 0 5px 2px 27px; }
.prompt .caret { background: #6b6b6b; }
.prompt b { margin: 0 16px 0 7px; }
.prompt button { height: 20px; line-height: 20px; background: #d2d2d2; border-radius: 3px; margin-right: 7px; white-space: nowrap; }
.prompt button:last-of-type { margin-right: 2px; }
.prompt em { font-style: normal; color: #1414f0; }
.prompt input { flex: 1; min-width: 0; }

.status { height: 39px; display: flex; align-items: flex-start; border-top: 1px solid #3c4352; padding-right: 5px; }
.layouts { display: flex; padding-left: 17px; color: #b6bbc4; }
.layouts a { height: 22px; line-height: 22px; padding: 0 15px; background: #2b313f; clip-path: polygon(0 0, 100% 0, calc(100% - 7px) 100%, 7px 100%); }
.layouts .on { background: #3b4252; color: #fff; font-weight: 700; }
.layouts button { width: 26px; height: 22px; margin-left: 6px; background: #2b313f; font-size: 20px; line-height: 20px; clip-path: polygon(0 0, 100% 0, calc(100% - 5px) 100%, 5px 100%); }
.coords { width: 226px; height: 31px; margin-top: 1px; line-height: 31px; padding-right: 7px; text-align: right; background: #3b4252; color: #eceef1; }
.sg { height: 31px; margin: 1px 0 0 4px; display: flex; align-items: center; background: #3b4252; }
.sg-near { margin-left: 1px; }
.sg-first { margin-left: 2px; }
.sg .caret { margin: 0 4px 0 6px; }
.sg button { height: 29px; display: flex; align-items: center; justify-content: center; }
.sg svg { width: 20px; height: 20px; }
.s-28 { width: 28px; } .s-30 { width: 30px; }
.sg .on { background: #5b8cc4; }
.sdiv { width: 4px; height: 31px; margin: 1px 0 0 4px; background: #3b4252; }

/* spreadsheet window */
.wps { width: 317px; flex: none; background: #f4f4f4; color: #222; display: flex; flex-direction: column; overflow: hidden; }
.wtabs { height: 48px; background: #eff2f8; display: flex; align-items: flex-end; }
.home { width: 47px; height: 35px; flex: none; line-height: 38px; background: #5b8cfb; color: #fff; border-radius: 0 3px 0 0; display: flex; justify-content: flex-end; padding-right: 27px; overflow: hidden; white-space: nowrap; }
.book { margin-left: 3px; height: 35px; flex: 1; min-width: 0; display: flex; align-items: center; gap: 4px; padding: 3px 0 0 10px; white-space: nowrap; background: #f5f5f5; border: 1px solid #c9ced8; border-width: 1px 0 0 1px; color: #36a03c; border-radius: 4px 0 0 0; }
.book svg { margin-left: 14px; }
.s-icon { width: 21px; height: 21px; flex: none; background: #2fb67c; color: #fff; text-align: center; line-height: 21px; border-radius: 2px; }
.wtools { height: 47px; display: flex; align-items: center; background: #f5f5f5; border-bottom: 1px solid #e0e0e0; white-space: nowrap; }
.w-file { margin: 0 7px 0 2px; flex: none; }
.wsep { width: 1px; height: 28px; background: #dcdcdc; margin: 0 5px 0 4px; }
.wb { width: 29px; padding: 0 5px; flex: none; }
.wb svg { width: 18px; height: 19px; }
.w-start { margin-left: 3px; width: 72px; height: 26px; flex: none; text-align: left; padding-left: 12px; background: #57ab55; color: #fff; border-radius: 13px; font-weight: 700; }
.wformula { height: 52px; display: flex; align-items: center; background: #e6e6e6; padding-top: 6px; }
.wformula input { height: 27px; background: #fff; border: 1px solid #d2d2d2; }
.namebox { width: 153px; border-radius: 0 3px 3px 0; padding: 0 46px 0 0; text-align: center; }
.wformula .caret { margin-left: -10px; width: 7px; height: 4px; background: #999; }
.wz { margin-left: 56px; }
.fx { width: 22px; margin: 0 8px 0 9px; font-size: 20px; color: #444; }
.formula { flex: 1; min-width: 0; border-radius: 3px 0 0 3px; padding: 0 12px; font-size: 16px; }
.grid { width: 100%; border-collapse: separate; border-spacing: 0; table-layout: fixed; font-size: 18px; line-height: 26px; }
.grid th, .grid td { padding: 0; border: 0 solid #111; font-weight: 400; text-align: left; }
.grid th:first-child { width: 58px; border-right-width: 1px; background: #fff; text-align: center; border-top: 1px solid #d4d4d4; }
.grid tbody tr { height: 55px; }
.grid td { background: #f4f4f4; color: #111; padding-left: 3px; border-top-width: 1px; white-space: nowrap; }
.grid .h, .grid .h td, .grid .h th { color: #f2f4f8; font-size: 20px; }
.grid .h td { background: #445069; }
.grid .h th:first-child { background: #3f609f; border-top-color: #111; }
.grid .h + tr th:first-child { border-top-color: #111; }
.grid .cols { height: 30px; color: #777; }
.grid .cols th { border: 0; background: #e8e8e8; }
.grid .cols .sel { background: #d3d3d3; border-bottom: 2px solid #8fba8c; }
.grid tbody .title { height: 62px; }
.grid .title th:first-child { background: #bf3a40; color: #fff6ee; font-size: 23px; border: 0; padding-right: 6px; }
.grid tbody .next { height: 14px; line-height: 13px; }
.grid .next th:first-child { background: #bf3a40; border-right: 0; border-top-color: #111; }
.sheets { height: 27px; display: flex; background: #e8e8e8; line-height: 27px; }
.sheets button { width: 105px; padding-left: 9px; flex: none; }
.s2 { width: 83px; flex: none; text-align: center; background: #cdcdcd; color: #555; }
.s3 { flex: 1; padding-left: 21px; background: #fff; color: #36a03c; font-weight: 700; white-space: nowrap; overflow: hidden; }

/* taskbar */
.taskbar { height: 50px; flex: none; display: flex; align-items: stretch; position: relative; background: linear-gradient(90deg, #22373e, #23383f 50%, #1e2c3f 72%, #1b2845); }
.start { width: 60px; display: flex; align-items: center; justify-content: center; }
.app { width: 51px; margin: 0 0 0 9px; display: flex; align-items: center; justify-content: center; border-bottom: 3px solid #76a9dc; padding-top: 3px; }
.app + .app { margin-left: 11px; }
.app.on { width: 61px; margin: 0 -5px 0 6px; background: #4b5d64; }
.tafe { position: absolute; left: 11px; top: 0; display: flex; gap: 8px; align-items: center; font: 700 36px/40px "Noto Sans", sans-serif; color: #fff; opacity: .3; pointer-events: none; }
.tray { display: flex; align-items: center; gap: 10px; margin: 4px 4px 4px 0; padding-right: 26px; border-right: 1px solid #7d879a; color: #fff; }
.mic { margin: 0 5px; }
.ime { margin: 0 12px 0 2px; }
```
